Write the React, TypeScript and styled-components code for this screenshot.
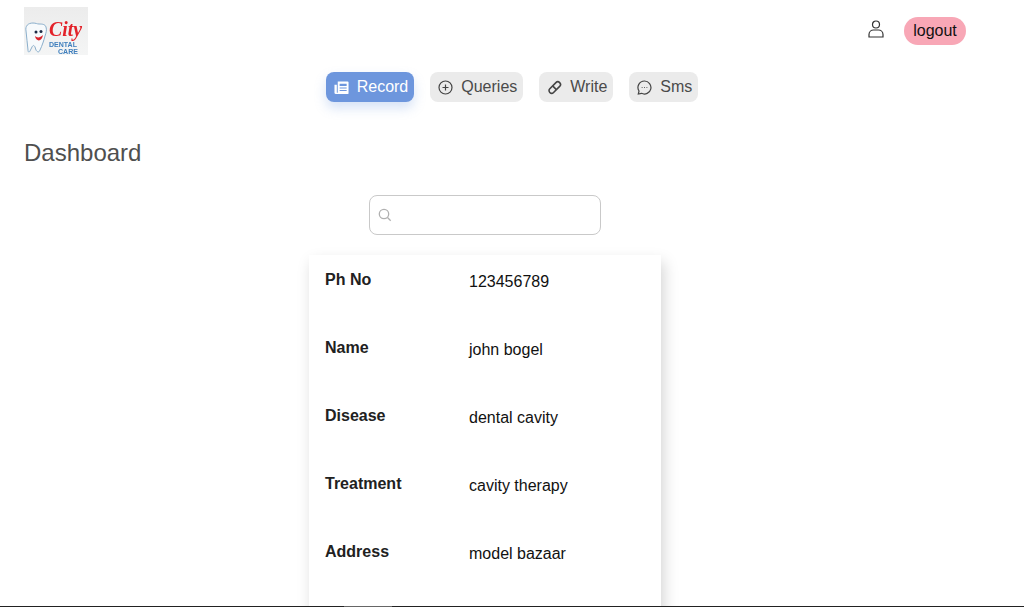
import React from "react";
import styled, { createGlobalStyle } from "styled-components";

const Global = createGlobalStyle`
  html, body { margin: 0; padding: 0; height: 100%; overflow: hidden; background: #fff; }
  body { font-family: "Liberation Sans", Arial, sans-serif; }
  * { box-sizing: border-box; }
`;
const Page = styled.div`
  position: relative;
  height: 607px;
  overflow: hidden;
  background: #fff;
`;
const BottomEdge = styled.div`
  position: absolute;
  left: 0;
  right: 0;
  bottom: 0;
  height: 1px;
  background: linear-gradient(to right, #222 0, #222 344px, #666 344px, #666 392px, #222 392px);
`;
const Header = styled.header`
  display: flex;
  align-items: flex-start;
  justify-content: space-between;
  height: 72px;
  padding: 7px 58px 0 24px;
`;
const Logo = styled.svg`
  display: block;
  width: 64px;
  height: 48px;
`;
const Account = styled.div`
  display: flex;
  align-items: flex-start;
  gap: 20px;
  margin-top: 10px;
`;
const UserIcon = styled.svg`
  display: block;
  width: 16px;
  height: 18px;
  margin-top: 3px;
`;
const LogoutButton = styled.button`
  height: 28px;
  width: 62px;
  padding: 0;
  border: 0;
  border-radius: 14px;
  background: #f8a7b6;
  color: #111;
  font: 16px "Liberation Sans", Arial, sans-serif;
`;
const Nav = styled.nav`
  display: flex;
  justify-content: center;
  gap: 16px;
`;
const Tab = styled.a<{ $active?: boolean }>`
  display: flex;
  align-items: center;
  gap: 8px;
  height: 30px;
  padding: 0 6px 0 8px;
  border-radius: 8px;
  font-size: 16px;
  background: ${(p) => (p.$active ? "#6d96dd" : "#ebebeb")};
  color: ${(p) => (p.$active ? "#fff" : "#4a4a4a")};
  box-shadow: ${(p) => (p.$active ? "0 6px 12px rgba(109,150,221,.28)" : "none")};
`;
const Title = styled.h1`
  margin: 37px 0 0 24px;
  font-size: 24px;
  line-height: 28px;
  font-weight: 400;
  color: #4f4f4f;
`;
const Content = styled.main`
  display: flex;
  flex-direction: column;
  align-items: center;
  padding-right: 54px;
`;
const SearchBox = styled.div`
  display: flex;
  align-items: center;
  width: 232px;
  height: 40px;
  margin-top: 28px;
  padding-left: 8px;
  border: 1px solid #c9c9c9;
  border-radius: 8px;
  color: #b0b0b0;
`;
const Card = styled.section`
  width: 352px;
  height: 400px;
  margin-top: 20px;
  padding: 16px 16px 0;
  background: #fff;
  box-shadow: 3px 7px 14px rgba(0, 0, 0, 0.17);
`;
const Row = styled.div`
  display: grid;
  grid-template-columns: 144px 1fr;
  height: 68px;
`;
const Label = styled.div`
  font-size: 16px;
  line-height: 18px;
  font-weight: 700;
  color: #212121;
`;
const Value = styled.div`
  font-size: 16px;
  line-height: 18px;
  margin-top: 2px;
  color: #111;
`;

const rows = [
  ["Ph No", "123456789"],
  ["Name", "john bogel"],
  ["Disease", "dental cavity"],
  ["Treatment", "cavity therapy"],
  ["Address", "model bazaar"],
];

export default function App() {
  return (
    <Page>
      <Global />
      <Header>
        <Logo viewBox="0 0 64 48">
          <defs>
            <filter id="soft" x="-5%" y="-5%" width="110%" height="110%">
              <feGaussianBlur stdDeviation="0.4" />
            </filter>
            <linearGradient id="logoBg" x1="0" y1="0" x2="0" y2="1">
              <stop offset="0" stopColor="#ececec" />
              <stop offset="1" stopColor="#f4f5f5" />
            </linearGradient>
          </defs>
          <rect width="64" height="48" fill="url(#logoBg)" />
          <g filter="url(#soft)">
            <path d="M2 24c-1-5 2-8 7-8 3 0 4 1 6 1 3 0 6 0 7 3 1 3 0 6-1 9-1 4-3 10-5 14-1 3-3 2-4 0l-1-3c-1-2-2-2-3 0l-2 4c-1 2-2 1-2-1-1-6-1-13-2-19z" fill="#f7fafc" stroke="#8aaecb" strokeWidth="1" />
            <circle cx="12" cy="25" r="1.500" fill="#1e2a44" />
            <circle cx="17" cy="24.500" r="1.500" fill="#1e2a44" />
            <path d="M11 29c2 2 5 2 8-1-1 7-7 7-8 1z" fill="#d8232a" />
            <text x="25" y="29" fontFamily="Liberation Serif, serif" fontStyle="italic" fontWeight="700" fontSize="20" textLength="33" lengthAdjust="spacingAndGlyphs" fill="#e3242b">City</text>
            <text x="25" y="40" fontFamily="Liberation Sans, sans-serif" fontWeight="700" fontSize="6.500" textLength="28" lengthAdjust="spacingAndGlyphs" fill="#3f7fbd">DENTAL</text>
            <text x="34" y="46.500" fontFamily="Liberation Sans, sans-serif" fontWeight="700" fontSize="6.500" textLength="20" lengthAdjust="spacingAndGlyphs" fill="#3f7fbd">CARE</text>
          </g>
        </Logo>
        <Account>
          <UserIcon viewBox="0 0 16 18" fill="none" stroke="#333" strokeWidth="1.200">
            <circle cx="8" cy="4.500" r="3.500" />
            <path d="M1 17v-2.500C1 11.500 3.500 10 5.500 10h5c2 0 4.500 1.500 4.500 4.500V17z" />
          </UserIcon>
          <LogoutButton>logout</LogoutButton>
        </Account>
      </Header>
      <Nav>
        <Tab $active>
          <svg width="15" height="15" viewBox="0 0 16 16" fill="#fff">
            <path d="M4 1.500h10.500a1 1 0 0 1 1 1V14a1 1 0 0 1-1 1H2a1.500 1.500 0 0 1-1.500-1.500V5H3v8.500h1zM6 4v2.500h7.500V4zM6 8v1h7.500V8zM6 10.700v1h7.500v-1z" fillRule="evenodd" />
          </svg>
          Record
        </Tab>
        <Tab>
          <svg width="15" height="15" viewBox="0 0 15 15" fill="none" stroke="#444" strokeWidth="1.200">
            <circle cx="7.500" cy="7.500" r="6.500" />
            <path d="M7.500 4.500v6M4.500 7.500h6" />
          </svg>
          Queries
        </Tab>
        <Tab>
          <svg width="15" height="15" viewBox="0 0 16 16" fill="none" stroke="#444" strokeWidth="1.700">
            <path d="M9.500 2.800a2.800 2.800 0 0 1 4 4L7 13.300a2.800 2.800 0 0 1-4-4z" />
            <path d="M6 6.200l4 4" />
          </svg>
          Write
        </Tab>
        <Tab>
          <svg width="15" height="15" viewBox="0 0 15 15" fill="none" stroke="#444" strokeWidth="1.200">
            <path d="M7.500 1a6.500 6.500 0 1 1-3 12.300L1.300 14l.7-3A6.500 6.500 0 0 1 7.500 1z" />
            <path d="M4.700 7.500h.8M7.100 7.500h.8M9.500 7.500h.8" />
          </svg>
          Sms
        </Tab>
      </Nav>
      <Title>Dashboard</Title>
      <Content>
        <SearchBox>
          <svg width="14" height="14" viewBox="0 0 14 14" fill="none" stroke="currentColor" strokeWidth="1.300">
            <circle cx="6" cy="6" r="4.700" />
            <path d="M9.500 9.500l3.200 3.200" />
          </svg>
        </SearchBox>
        <Card>
          {rows.map(([k, v]) => (
            <Row key={k}>
              <Label>{k}</Label>
              <Value>{v}</Value>
            </Row>
          ))}
        </Card>
      </Content>
      <BottomEdge />
    </Page>
  );
}
